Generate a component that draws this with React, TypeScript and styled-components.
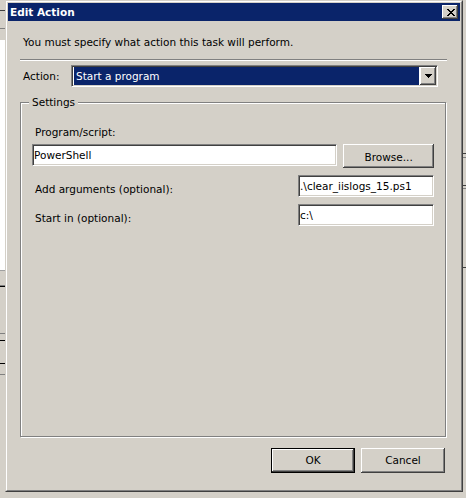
import * as React from "react";
import styled, { createGlobalStyle } from "styled-components";

const FACE = "#d4d0c8";
const SHADOW = "#808080";
const DARK = "#404040";
const NAVY = "#0a246a";

const RAISED = `inset -1px -1px ${DARK}, inset 1px 1px #fff, inset -2px -2px ${SHADOW}, inset 2px 2px ${FACE}`;
const SUNKEN_INNER = `inset 1px 1px ${DARK}, inset -1px -1px ${FACE}`;

// bits of the windows behind the dialog, top to bottom
const LEFT_EDGE = [
  { h: 10, c: FACE },
  { h: 1, c: DARK },
  { h: 17, c: FACE },
  { h: 1, c: SHADOW },
  { h: 11, c: FACE },
  { h: 230, c: "#ffffff" },
  { h: 1, c: "#a0a0a0" },
  { h: 14, c: FACE },
  { h: 1, c: SHADOW },
  { h: 1, c: "#000000" },
  { h: 46, c: FACE },
  { h: 1, c: SHADOW },
  { h: 6, c: FACE },
  { h: 1, c: "#000000" },
  { h: 22, c: FACE },
  { h: 1, c: "#000000" },
  { h: 10, c: FACE },
  { h: 1, c: SHADOW },
];

const RIGHT_EDGE = [
  { h: 153, c: FACE },
  { h: 1, c: DARK },
  { h: 3, c: FACE },
  { h: 1, c: SHADOW },
  { h: 27, c: FACE },
  { h: 1, c: DARK },
  { h: 2, c: FACE },
  { h: 1, c: SHADOW },
  { h: 78, c: FACE },
  { h: 1, c: DARK },
];

const App = () => (
  <>
    <GlobalStyle />
    <Screen>
      <Strip $w={5}>
        {LEFT_EDGE.map((band, i) => (
          <Band key={i} $h={band.h} $c={band.c} />
        ))}
      </Strip>
      <Dialog>
        <Frame>
          <TitleBar>
            <Title>Edit Action</Title>
            <CloseButton aria-label="Close">
              <svg width="8" height="7" viewBox="0 0 8 7" shapeRendering="crispEdges">
                <path
                  fill="#000"
                  d="M0 0h2v1H0zM6 0h2v1H6zM1 1h2v1H1zM5 1h2v1H5zM2 2h4v1H2zM3 3h2v1H3zM2 4h4v1H2zM1 5h2v1H1zM5 5h2v1H5zM0 6h2v1H0zM6 6h2v1H6z"
                />
              </svg>
            </CloseButton>
          </TitleBar>
          <Body>
            <Intro>You must specify what action this task will perform.</Intro>
            <Separator />
            <ActionRow>
              <ActionLabel>Action:</ActionLabel>
              <Combo>
                <ComboValue>Start a program</ComboValue>
                <DropButton>
                  <svg width="7" height="4" viewBox="0 0 7 4" shapeRendering="crispEdges">
                    <path fill="#000" d="M0 0h7v1H0zM1 1h5v1H1zM2 2h3v1H2zM3 3h1v1H3z" />
                  </svg>
                </DropButton>
              </Combo>
            </ActionRow>
            <GroupBox>
              <Legend>Settings</Legend>
              <FieldLabel>Program/script:</FieldLabel>
              <ProgramRow>
                <TextBox $w={306}>PowerShell</TextBox>
                <PushButton $w={91} $low>
                  Browse...
                </PushButton>
              </ProgramRow>
              <OptionRow>
                <OptionLabel>Add arguments (optional):</OptionLabel>
                <TextBox $w={136}>.\clear_iislogs_15.ps1</TextBox>
              </OptionRow>
              <OptionRow>
                <OptionLabel>Start in (optional):</OptionLabel>
                <TextBox $w={136}>c:\</TextBox>
              </OptionRow>
            </GroupBox>
            <ButtonRow>
              <PushButton $w={84} $default>
                OK
              </PushButton>
              <PushButton $w={84}>Cancel</PushButton>
            </ButtonRow>
          </Body>
        </Frame>
      </Dialog>
      <Strip $w={3}>
        {RIGHT_EDGE.map((band, i) => (
          <Band key={i} $h={band.h} $c={band.c} />
        ))}
      </Strip>
    </Screen>
  </>
);

const GlobalStyle = createGlobalStyle`
  html, body {
    margin: 0;
    padding: 0;
    background: ${FACE};
  }

  body {
    width: 466px;
    height: 498px;
    overflow: hidden;
    font-family: "DejaVu Sans", "Liberation Sans", sans-serif;
    font-size: 10.5px;
    color: #000;
  }
`;

const Screen = styled.div`
  display: flex;
  align-items: flex-start;
  width: 466px;
  height: 498px;
`;

const Strip = styled.div<{ $w: number }>`
  display: flex;
  flex-direction: column;
  width: ${(p) => p.$w}px;
  flex-shrink: 0;
`;

const Band = styled.div<{ $h: number; $c: string }>`
  height: ${(p) => p.$h}px;
  background: ${(p) => p.$c};
`;

const Dialog = styled.div`
  box-sizing: border-box;
  width: 458px;
  height: 492px;
  flex-shrink: 0;
  border: 1px solid;
  border-color: ${FACE} ${DARK} ${DARK} ${FACE};
`;

const Frame = styled.div`
  box-sizing: border-box;
  display: flex;
  flex-direction: column;
  height: 100%;
  padding: 1px;
  border: 1px solid;
  border-color: #fff ${SHADOW} ${SHADOW} #fff;
  background: ${FACE};
`;

const TitleBar = styled.div`
  display: flex;
  align-items: center;
  justify-content: space-between;
  height: 18px;
  padding: 0 2px;
  background: ${NAVY};
`;

const Title = styled.span`
  color: #fff;
  font-weight: bold;
  line-height: 13px;
`;

const CloseButton = styled.div`
  display: flex;
  align-items: center;
  justify-content: center;
  width: 16px;
  height: 14px;
  padding-left: 1px;
  box-sizing: border-box;
  background: ${FACE};
  box-shadow: ${RAISED};
`;

const Body = styled.div`
  display: flex;
  flex-direction: column;
  flex: 1;
  min-height: 0;
  padding: 15px 13px 16px 12px;
`;

const Intro = styled.div`
  padding-left: 3px;
  line-height: 13px;
`;

const Separator = styled.div`
  margin-top: 10px;
  border-top: 1px solid ${SHADOW};
  border-bottom: 1px solid #fff;
`;

const ActionRow = styled.div`
  display: flex;
  align-items: center;
  margin-top: 4px;
  padding-left: 3px;
`;

const ActionLabel = styled.span`
  width: 48px;
  line-height: 13px;
`;

const Combo = styled.div`
  box-sizing: border-box;
  display: flex;
  width: 367px;
  height: 22px;
  padding: 1px 1px 1px 2px;
  border: 1px solid;
  border-color: ${SHADOW} #fff #fff ${SHADOW};
  box-shadow: ${SUNKEN_INNER};
  background: #fff;
`;

const ComboValue = styled.div`
  flex: 1;
  margin-right: 1px;
  padding-left: 2px;
  line-height: 18px;
  color: #fff;
  background: ${NAVY};
`;

const DropButton = styled.div`
  display: flex;
  align-items: center;
  justify-content: center;
  width: 16px;
  background: ${FACE};
  box-shadow: ${RAISED};
`;

const GroupBox = styled.fieldset`
  display: flex;
  flex-direction: column;
  flex: 1;
  min-width: 0;
  margin: 9px 1px 0 0;
  padding: 17px 11px 0;
  border: 1px solid ${SHADOW};
  box-shadow: inset 1px 1px #fff, 1px 1px #fff;
`;

const Legend = styled.legend`
  margin-left: -3px;
  padding: 0 3px;
  line-height: 13px;
  background: ${FACE};
`;

const FieldLabel = styled.div`
  padding-left: 3px;
  line-height: 13px;
`;

const ProgramRow = styled.div`
  display: flex;
  align-items: flex-start;
  gap: 6px;
  margin-top: 5px;
`;

const OptionRow = styled.div`
  display: flex;
  align-items: flex-start;
  justify-content: space-between;
  margin-top: 7px;
`;

const OptionLabel = styled.span`
  padding: 8px 0 0 3px;
  line-height: 13px;
`;

const TextBox = styled.div<{ $w: number }>`
  box-sizing: border-box;
  width: ${(p) => p.$w}px;
  height: 22px;
  padding-left: 1px;
  border: 1px solid;
  border-color: ${SHADOW} #fff #fff ${SHADOW};
  box-shadow: ${SUNKEN_INNER};
  background: #fff;
  line-height: 20px;
  white-space: nowrap;
`;

const PushButton = styled.div<{ $w: number; $default?: boolean; $low?: boolean }>`
  box-sizing: border-box;
  display: flex;
  align-items: center;
  justify-content: center;
  width: ${(p) => p.$w}px;
  height: ${(p) => (p.$low ? 24 : 25)}px;
  padding-top: ${(p) => (p.$low ? 3 : 0)}px;
  border: ${(p) => (p.$default ? "1px solid #000" : "0")};
  background: ${FACE};
  box-shadow: ${(p) =>
    p.$default
      ? `inset -1px -1px ${DARK}, inset 1px 1px #fff, inset -2px -2px ${SHADOW}`
      : RAISED};
  line-height: 13px;
`;

const ButtonRow = styled.div`
  display: flex;
  justify-content: flex-end;
  gap: 6px;
  margin-top: 11px;
  padding-right: 2px;
`;

export default App;
